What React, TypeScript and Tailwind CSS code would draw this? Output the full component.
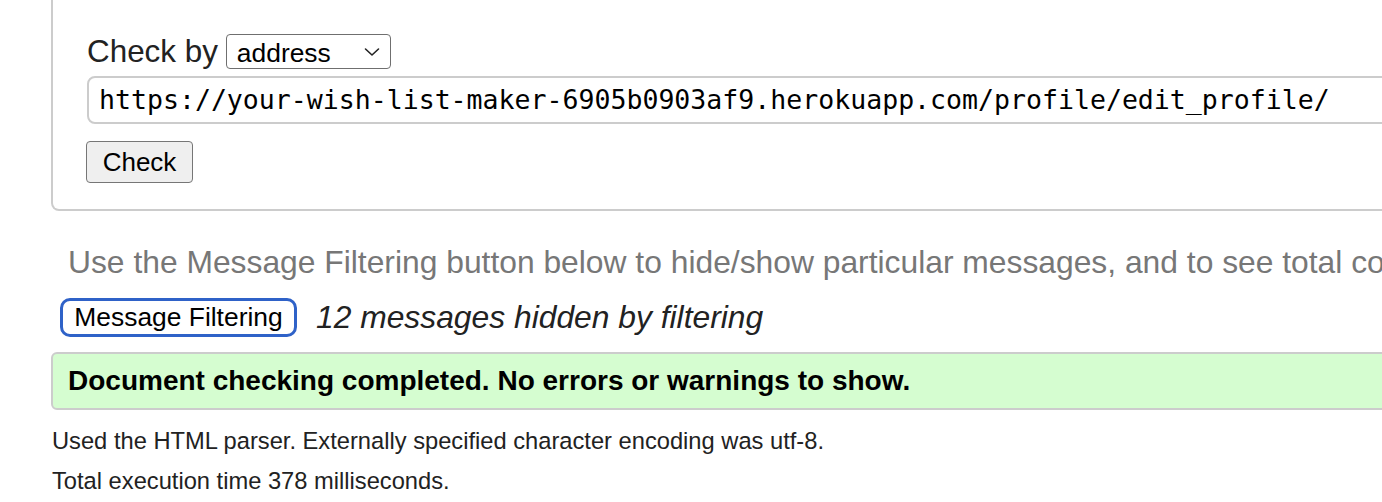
import React from "react";

export default function App() {
  const sans = { fontFamily: '"Liberation Sans", Arial, sans-serif' };
  return (
    <div className="w-[1382px] h-[502px] overflow-hidden bg-white" style={sans}>
      <div className="w-[1800px]">
        {/* form fieldset (top edge scrolled out of view) */}
        <div className="ml-[51px] w-[1600px] border-x-2 border-b-2 border-[#cccccc] rounded-b-[8px] pt-[34px] pl-[34px] pb-[26px]">
          <div className="flex items-center gap-[8px] h-[35px]">
            <span className="text-[31.4px] leading-none text-[#222222] mt-[1px]">Check by</span>
            <div className="flex items-center justify-between w-[165px] h-[35px] border border-[#6f6f6f] rounded-[4px] pl-[10px] pr-[8px] bg-white">
              <span className="text-[26.4px] leading-none text-black pt-[3px]">address</span>
              <svg width="16" height="10" viewBox="0 0 16 10" className="mr-[2px]">
                <path d="M1.5 2 L8 8 L14.5 2" fill="none" stroke="#222" strokeWidth="1.6" strokeLinecap="round" strokeLinejoin="round" />
              </svg>
            </div>
          </div>
          <div className="mt-[7px] w-[1500px] h-[48px] border-2 border-[#cccccc] rounded-[8px] flex items-center pl-[10px]">
            <span
              className="text-[26.55px] leading-none text-black whitespace-nowrap"
              style={{ fontFamily: '"DejaVu Sans Mono", "Liberation Mono", monospace' }}
            >
              https://your-wish-list-maker-6905b0903af9.herokuapp.com/profile/edit_profile/
            </span>
          </div>
          <div className="mt-[17px] -ml-px w-[107px] h-[42px] bg-[#efefef] border border-[#767676] rounded-[4px] flex items-center justify-center">
            <span className="text-[26px] leading-none text-black">Check</span>
          </div>
        </div>

        <p className="mt-[33px] ml-[68px] text-[31.8px] leading-[36px] text-[#777777] whitespace-nowrap">
          Use the Message Filtering button below to hide/show particular messages, and to see total counts of errors and warnings.
        </p>

        <div className="mt-[18px] ml-[60px] flex items-center gap-[19px]">
          <div className="w-[237px] h-[39px] border-[3px] border-[#2f62c8] rounded-[10px] bg-white flex items-center justify-center">
            <span className="text-[26.4px] leading-none text-black">Message Filtering</span>
          </div>
          <span className="text-[31.8px] leading-none italic text-[#222222] whitespace-nowrap">
            12 messages hidden by filtering
          </span>
        </div>

        <div className="mt-[15px] ml-[51px] w-[1600px] h-[58px] border-2 border-[#cccccc] rounded-[6px] bg-[#d5fdd0] flex items-center pl-[15px]">
          <span className="text-[28px] leading-none font-bold text-black whitespace-nowrap">
            Document checking completed. No errors or warnings to show.
          </span>
        </div>

        <p className="mt-[18px] ml-[52px] text-[23.7px] leading-[27px] text-[#222222] whitespace-nowrap">
          Used the HTML parser. Externally specified character encoding was utf-8.
        </p>
        <p className="mt-[13px] ml-[52px] text-[23.7px] leading-[27px] text-[#222222] whitespace-nowrap">
          Total execution time 378 milliseconds.
        </p>
      </div>
    </div>
  );
}
